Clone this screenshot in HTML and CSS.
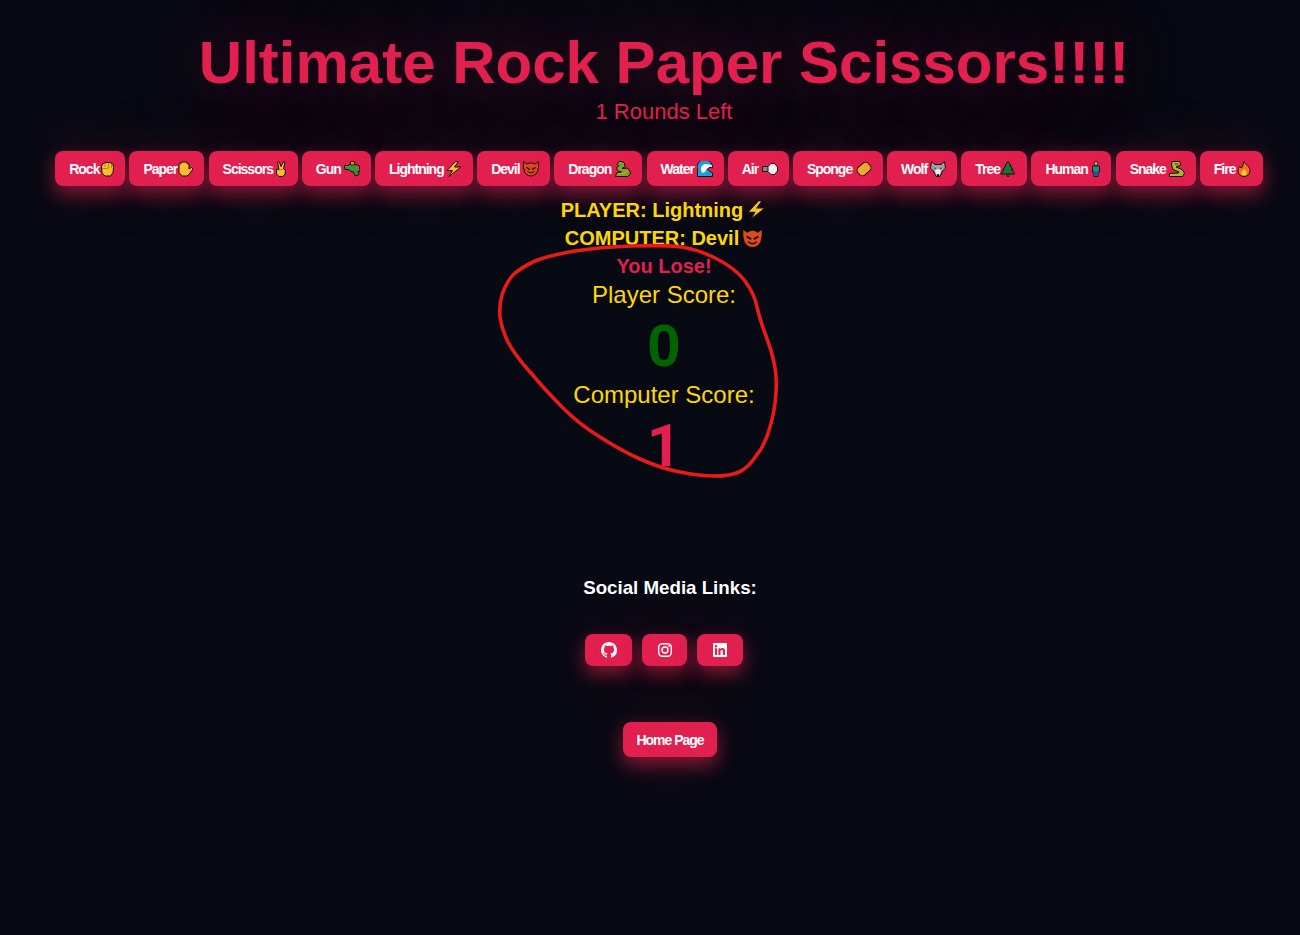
FILE: index.html
```html
<!DOCTYPE html>
<html lang="en">
<head>
    <meta charset="UTF-8">
    <meta name="viewport" content="width=device-width, initial-scale=1.0">
    <title>Ultimate Rock Paper Scissors</title>
    <link rel="stylesheet" href="styles.css">
</head>
<body>
    <header class="header">
        <h1>Ultimate Rock Paper Scissors!!!!</h1>
        <p class="rounds">1 Rounds Left</p>
    </header>

    <div class="choices">
        <button class="btn choice">Rock<svg class="emoji" viewBox="0 0 16 16"><path d="M2.500 5 4 2.500 7 1.500h4L14 3l.5 3.500-.5 5L11.500 15H6L3 12z" fill="#fbc02d" stroke="#111"/><path d="M3 7.500h4.500l3.500-1M6 2v4M9.500 2v4M12.500 3v4" fill="none" stroke="#a86f00" stroke-width=".7"/></svg></button>
        <button class="btn choice">Paper<svg class="emoji" viewBox="0 0 16 16"><path d="M2 3 4 2.500V1h6v1.500l2 .5v5l2.500-1.500L16 8l-4 5.500L10 15H5.500L2 12z" fill="#fbc02d" stroke="#111"/></svg></button>
        <button class="btn choice">Scissors<svg class="emoji" viewBox="0 0 16 16"><path d="M4.500 1 6 .5 8 5.500 10.500.5 12 1l-1.500 7 2 1-.5 4-2 2.500H6L3.500 13V8l2.500.5z" fill="#fbc02d" stroke="#111"/><path d="M6 9l4-.5" stroke="#a86f00" stroke-width=".7"/></svg></button>
        <button class="btn choice">Gun<svg class="emoji" viewBox="0 0 16 16"><path d="M0 4.500h4.500L6 3h5l4.500 2v2l.5 1v2.500h-2l1 3-3.500 1.500L9.500 11 6.500 10 4.500 8.500H1z" fill="#2e9a3a" stroke="#111"/><path d="M6.500.5h4v3.500h-4z" fill="#e08a1e" stroke="#111" stroke-width=".8"/><path d="M12 5.500h3v2h-3z" fill="#e34a3a"/></svg></button>
        <button class="btn choice">Lightning<svg class="emoji" viewBox="0 0 16 16"><path d="M9.500 .5 1 9.500h5.500L3 15.500 15 6H8.500L12.500.5z" fill="#fbc02d" stroke="#111"/></svg></button>
        <button class="btn choice">Devil<svg class="emoji" viewBox="0 0 16 16"><path d="M.5.5 4 3a7 7 0 0 1 8 0L15.500.5v6L15 8A7 7 0 1 1 1 8L.5 6.500z" fill="#dd4a1f" stroke="#111"/><path d="M3.500 6.500l3.500 2M12.500 6.500 9 8.500" stroke="#111" stroke-width="1.400"/><path d="M4.500 10.500q3.500 3 7 0" fill="none" stroke="#111"/></svg></button>
        <button class="btn choice">Dragon<svg class="emoji" viewBox="0 0 16 16"><path d="M4 .5h3l2.500 1.500.5 3.500-3 2 5.500-.5 2.500 3L15.500 13l-3 2.500H.5l1-3.500 5-1-3.500-1L1.500 7 4 4.500 1.500 3.500z" fill="#7aa52a" stroke="#111"/><path d="M3 13l6-1 3.500-2" fill="none" stroke="#e0a31e" stroke-width="1.200"/></svg></button>
        <button class="btn choice">Water<svg class="emoji" viewBox="0 0 16 16"><path d="M.5 9A7.500 7.500 0 0 1 15 3.500L15.500 7 13 6 10.500 8l3 3 2 1v3.500H.5z" fill="#1ba1dc" stroke="#111"/><path d="M4 8a5 5 0 0 1 5-5q3 0 6 1.500L15 6l-2-.5L9.500 8 8 11 5 12z" fill="#fff"/></svg></button>
        <button class="btn choice">Air<svg class="emoji" viewBox="0 0 16 16"><path d="M.5 5.500h7v5h-7z" fill="#888" stroke="#111"/><path d="M6 5.500 9 2.500h3.500L15.500 6v4l-3 3.500H9L6 10.500z" fill="#f4f4f4" stroke="#111"/></svg></button>
        <button class="btn choice">Sponge<svg class="emoji" viewBox="0 0 16 16"><rect x="1" y="3" width="14" height="10" rx="4" transform="rotate(-40 8 8)" fill="#f2a92d" stroke="#111"/></svg></button>
        <button class="btn choice">Wolf<svg class="emoji" viewBox="0 0 16 16"><path d="M1.500.5 5 3.500h6L14.500.5l1 7-3 2.500L10 15.500H6L3.500 10l-3-2.500z" fill="#9ca3a8" stroke="#111"/><path d="M5 9.500 8 8l3 1.500-1.500 5h-3z" fill="#f1f1f1"/><path d="M7 13.500h2V15H7zM4 7l2 .5M12 7l-2 .5" fill="#111" stroke="#111" stroke-width=".6"/></svg></button>
        <button class="btn choice">Tree<svg class="emoji" viewBox="0 0 16 16"><path d="M8 .5l3 4h-1l3 4h-1.500l3.500 4.500H.500L4 8.500H3l3-4H5z" fill="#127a2e" stroke="#111"/><path d="M7 13h2v2.500H7z" fill="#7a4a1e" stroke="#111" stroke-width=".7"/></svg></button>
        <button class="btn choice">Human<svg class="emoji" viewBox="0 0 16 16"><circle cx="8" cy="2.500" r="2" fill="#d8a066" stroke="#111" stroke-width=".8"/><path d="M4.500 5h7v6h-1.500v4.500H6V11H4.500z" fill="#1b8f8a" stroke="#111" stroke-width=".9"/><path d="M6.500 10.500h3v4.500h-3z" fill="#1c5fa8"/></svg></button>
        <button class="btn choice">Snake<svg class="emoji" viewBox="0 0 16 16"><path d="M3 .5h7.500L12 3.500 7 6l6 2.500 2.500 3.500-2 3.500H.5v-3l9-.5.5-1-6-2.500L2.500 4z" fill="#a4c02c" stroke="#111"/><path d="M5.500 3H9" stroke="#111" stroke-width=".8"/></svg></button>
        <button class="btn choice">Fire<svg class="emoji" viewBox="0 0 16 16"><path d="M8 .5c1 3 6 4.500 6 9.500a6 5.500 0 0 1-12 0c0-2 1-3.500 1.500-4.500L5.500 7c1-2 2-4 2.500-6.500z" fill="#f4731f" stroke="#111"/><path d="M8 7.500c.5 1.500 2.500 2.500 2.500 4.500a2.500 2.500 0 0 1-5 0C5.500 10.500 7.500 10 8 7.500z" fill="#fbd02d"/></svg></button>
    </div>

    <section class="result">
        <p class="result-line">PLAYER: Lightning<svg class="emoji-lg" viewBox="0 0 16 16"><path d="M9.500 .5 1 9.500h5.500L3 15.500 15 6H8.500L12.500.5z" fill="#fbc02d" stroke="#111"/></svg></p>
        <p class="result-line">COMPUTER: Devil<svg class="emoji-lg" viewBox="0 0 16 16"><path d="M.5.5 4 3a7 7 0 0 1 8 0L15.500.5v6L15 8A7 7 0 1 1 1 8L.5 6.500z" fill="#dd4a1f" stroke="#111"/><path d="M3.500 6.500l3.500 2M12.500 6.500 9 8.500" stroke="#111" stroke-width="1.400"/><path d="M4.500 10.500q3.500 3 7 0" fill="none" stroke="#111"/></svg></p>
        <p class="result-line lose">You Lose!</p>
        <p class="score-label">Player Score:</p>
        <p class="score score-player">0</p>
        <p class="score-label">Computer Score:</p>
        <p class="score score-computer">1</p>
    </section>

    <footer class="footer">
        <h3>Social Media Links:</h3>
        <div class="socials">
            <a class="btn social" href="#"><svg class="icon" viewBox="0 0 16 16"><path fill="#fff" d="M8 0C3.580 0 0 3.580 0 8c0 3.540 2.290 6.530 5.470 7.590.4.070.55-.17.55-.38 0-.19-.01-.82-.01-1.490-2.010.37-2.530-.49-2.690-.94-.09-.23-.48-.94-.82-1.130-.28-.15-.68-.52-.01-.53.63-.01 1.080.58 1.230.82.72 1.210 1.870.87 2.330.66.07-.52.28-.87.51-1.070-1.780-.2-3.640-.89-3.640-3.950 0-.87.31-1.590.82-2.150-.08-.2-.36-1.020.08-2.120 0 0 .67-.21 2.200.82.64-.18 1.320-.27 2-.27.68 0 1.360.09 2 .27 1.530-1.040 2.200-.82 2.200-.82.44 1.100.16 1.920.08 2.120.51.56.82 1.270.82 2.150 0 3.070-1.870 3.750-3.650 3.950.29.25.54.73.54 1.480 0 1.070-.01 1.930-.01 2.200 0 .21.15.46.55.38A8.013 8.013 0 0 0 16 8c0-4.420-3.580-8-8-8z"/></svg></a>
            <a class="btn social" href="#"><svg class="icon" viewBox="0 0 16 16"><rect x="1.700" y="1.700" width="12.600" height="12.600" rx="3.500" fill="none" stroke="#fff" stroke-width="1.400"/><circle cx="8" cy="8" r="3" fill="none" stroke="#fff" stroke-width="1.400"/><circle cx="12" cy="4" r=".9" fill="#fff"/></svg></a>
            <a class="btn social" href="#"><svg class="icon" viewBox="0 0 16 16"><rect x="1" y="1" width="14" height="14" rx="1" fill="#fff"/><path fill="#e2204f" d="M3 6.300h2.100V13H3zM4 3a1.200 1.200 0 1 1 0 2.500A1.200 1.200 0 0 1 4 3zM6.400 6.300h2v.9c.4-.6 1.100-1.100 2.100-1.100 2 0 2.500 1.300 2.500 3.100V13h-2.100V9.700c0-.8-.1-1.700-1.100-1.700s-1.300.8-1.300 1.700V13H6.400z"/></svg></a>
        </div>
        <a class="btn home" href="#">Home Page</a>
    </footer>

    <svg class="scribble" viewBox="0 0 1300 935"><path d="M682,247 Q700,250 717,259 Q735,268 745,281 Q755,295 757,307 Q760,320 766,336 Q772,352 774,363 Q777,375 776,392 Q775,410 770,427 Q765,445 756,456 Q748,468 739,472 Q730,476 715,476 Q700,476 680,472 Q660,468 640,459 Q620,450 600,437 Q580,425 562,407 Q545,390 530,372 Q515,355 508,342 Q502,330 500,317 Q499,305 502,295 Q505,285 512,276 Q520,268 535,261 Q550,255 575,251 Q600,247 632,246 Q665,245 682,247 Z"/></svg>
</body>
</html>
```

FILE: styles.css
```css
body {
    font-family: "Liberation Sans", Arial, sans-serif;
    margin: 0;
    height: 935px;
    overflow: hidden;
    position: relative;
    background-color: #070a13;
    text-align: center;
}
p, h1, h3 {
    margin: 0;
}
.header {
    padding: 27px 0 0 28px;
}
h1 {
    font-size: 60px;
    line-height: 72px;
    color: #e2204f;
    text-shadow: 0 0 70px rgba(226, 32, 79, 0.5);
}
.rounds {
    font-size: 22px;
    line-height: 26px;
    color: #e2204f;
}
.choices {
    display: grid;
    grid-template-columns: 70px 75px 89px 69px 98px 73px 88px 77px 61px 90px 70px 66px 80px 80px 63px;
    justify-content: center;
    gap: 4.2px;
    margin-top: 26px;
    padding-left: 18px;
}
.btn {
    display: inline-flex;
    align-items: center;
    justify-content: center;
    height: 35px;
    padding: 0 13px;
    box-sizing: border-box;
    border: none;
    border-radius: 8px;
    background-color: #e2204f;
    color: #fff;
    font-family: inherit;
    font-size: 14px;
    font-weight: 700;
    letter-spacing: -1px;
    text-decoration: none;
    box-shadow: 0 8px 18px rgba(226, 32, 79, 0.55), 0 0 60px rgba(226, 32, 79, 0.18);
}
.choice {
    justify-content: flex-start;
    padding: 0 11px 0 14px;
}
.emoji {
    flex: none;
    width: 16px;
    height: 16px;
    margin-left: auto;
}
.emoji-lg {
    width: 21px;
    height: 21px;
    margin-left: 3px;
    vertical-align: -4px;
}
.result {
    margin-top: 10px;
    padding-left: 28px;
}
.result-line {
    font-size: 20px;
    font-weight: 700;
    line-height: 28px;
    color: #ffd700;
}
.lose {
    color: #e2204f;
    margin-bottom: 1px;
}
.score-label {
    font-size: 24px;
    line-height: 28px;
    color: #ffd700;
}
.score {
    font-size: 60px;
    font-weight: 700;
    line-height: 72px;
    margin: 1px 0 -1px;
}
.score-player {
    color: #006400;
}
.score-computer {
    color: #e2204f;
    font-family: Roboto, sans-serif;
}
.footer {
    margin-top: 96px;
    padding-left: 40px;
}
.footer h3 {
    font-size: 18.72px;
    line-height: 22px;
    color: #fff;
}
.socials {
    display: grid;
    grid-template-columns: 47px 45px 46px;
    justify-content: center;
    gap: 10px;
    margin-top: 35px;
    padding-right: 12px;
}
.social {
    height: 32px;
    padding: 0;
}
.icon {
    width: 16px;
    height: 16px;
}
.home {
    margin-top: 56px;
}
.scribble {
    position: absolute;
    left: 0;
    top: 0;
    width: 1300px;
    height: 935px;
    pointer-events: none;
}
.scribble path {
    fill: none;
    stroke: #e81a1a;
    stroke-width: 3.6;
}
```
